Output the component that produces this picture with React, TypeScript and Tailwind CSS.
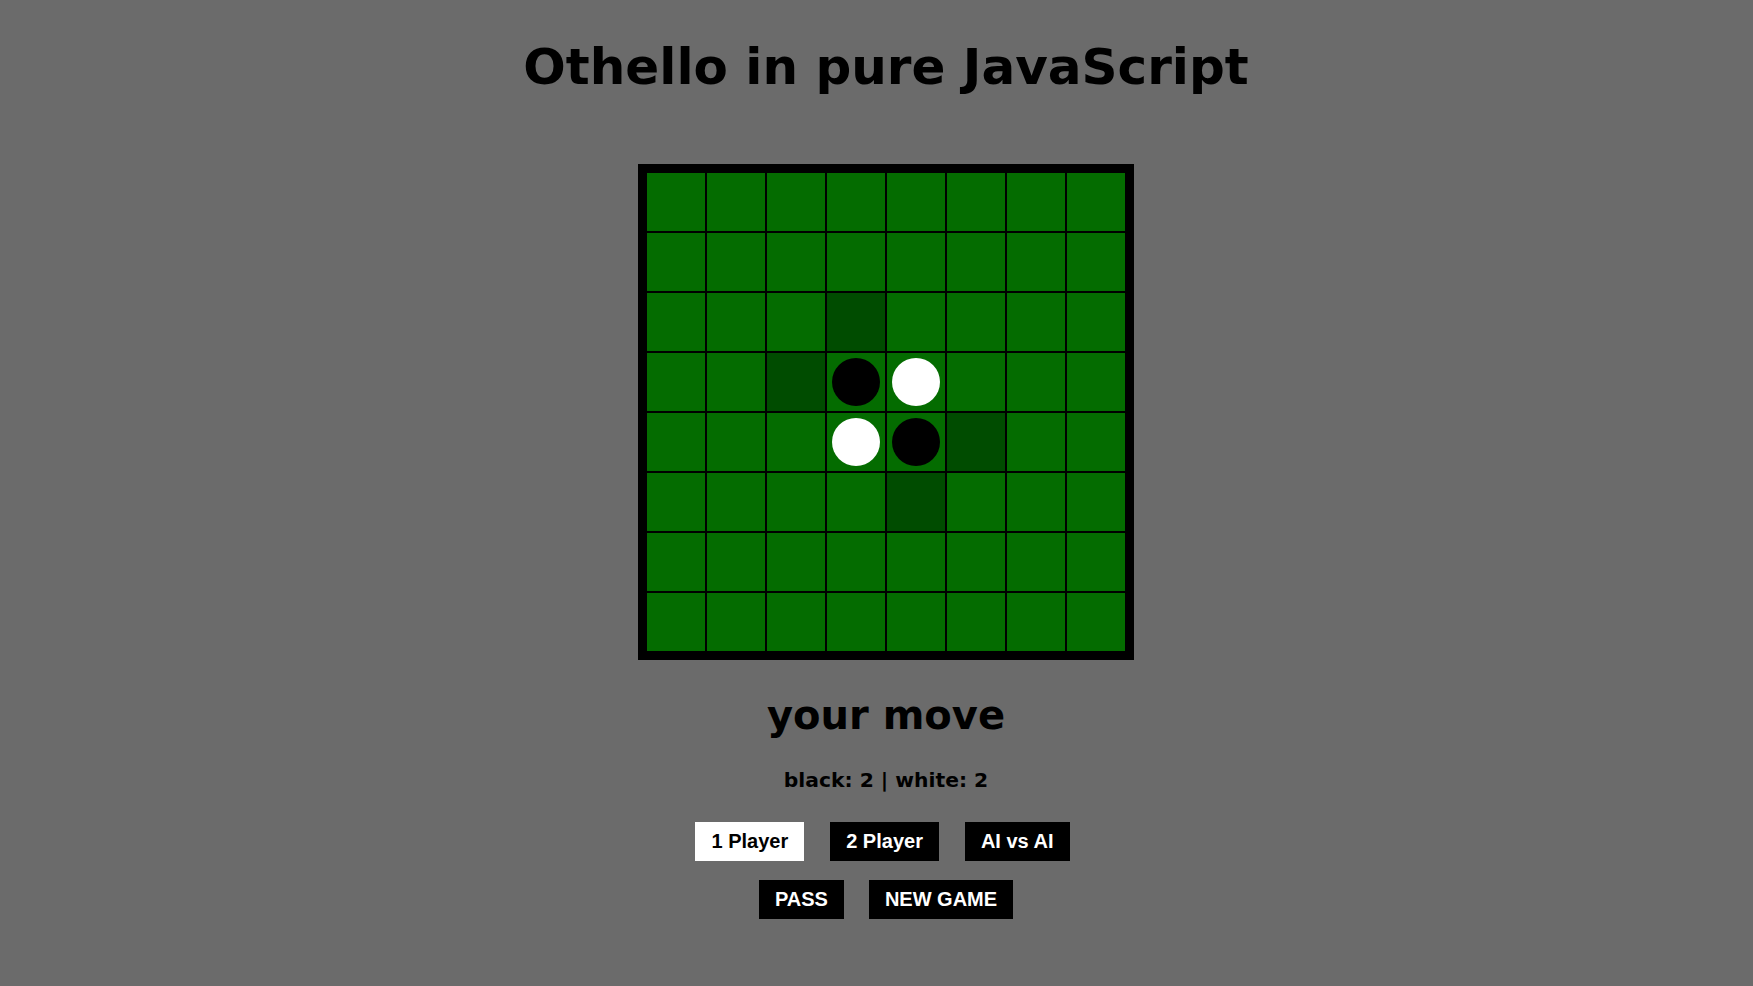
import { useState } from 'react'

type Cell = 'black' | 'white' | null

const initialBoard = (): Cell[] => {
  const cells: Cell[] = Array(64).fill(null)
  cells[27] = 'black'
  cells[28] = 'white'
  cells[35] = 'white'
  cells[36] = 'black'
  return cells
}

const hints = new Set([19, 26, 37, 44])

export default function App() {
  const [board] = useState<Cell[]>(initialBoard)
  const [mode, setMode] = useState('1 Player')

  const black = board.filter((c) => c === 'black').length
  const white = board.filter((c) => c === 'white').length

  return (
    <div
      className="min-h-[986px] w-full bg-[#6b6b6b] pl-[19px] flex flex-col items-center text-black"
      style={{ fontFamily: '"DejaVu Sans", Verdana, sans-serif' }}
    >
      <h1 className="mt-[38px] text-[50px] leading-[58px] font-bold">
        Othello in pure JavaScript
      </h1>

      <div className="mt-[68px] bg-black p-[9px] grid grid-cols-8 gap-[2px]">
        {board.map((cell, i) => (
          <div
            key={i}
            className={
              'w-[58px] h-[58px] flex items-center justify-center ' +
              (hints.has(i) ? 'bg-[#004c00]' : 'bg-[#046c00]')
            }
          >
            {cell === 'black' && (
              <div className="w-[48px] h-[48px] rounded-full bg-black" />
            )}
            {cell === 'white' && (
              <div className="w-[48px] h-[48px] rounded-full bg-white" />
            )}
          </div>
        ))}
      </div>

      <h2 className="mt-[32px] text-[40px] leading-[47px] font-bold">
        your move
      </h2>

      <p className="mt-[30px] text-[20.3px] leading-[23px] font-bold">
        black: {black} | white: {white}
      </p>

      <div
        className="mt-[30px] pr-[7px] flex gap-[26px]"
        style={{ fontFamily: '"Liberation Sans", Arial, sans-serif' }}
      >
        {['1 Player', '2 Player', 'AI vs AI'].map((m) => (
          <button
            key={m}
            onClick={() => setMode(m)}
            className={
              'h-[39px] px-4 pb-[2px] text-[20px] font-bold ' +
              (mode === m ? 'bg-white text-black' : 'bg-black text-white')
            }
          >
            {m}
          </button>
        ))}
      </div>

      <div
        className="mt-[19px] flex gap-[25px]"
        style={{ fontFamily: '"Liberation Sans", Arial, sans-serif' }}
      >
        <button className="h-[39px] px-4 pb-[2px] text-[20px] font-bold bg-black text-white">
          PASS
        </button>
        <button className="h-[39px] px-4 pb-[2px] text-[20px] font-bold bg-black text-white">
          NEW GAME
        </button>
      </div>
    </div>
  )
}
